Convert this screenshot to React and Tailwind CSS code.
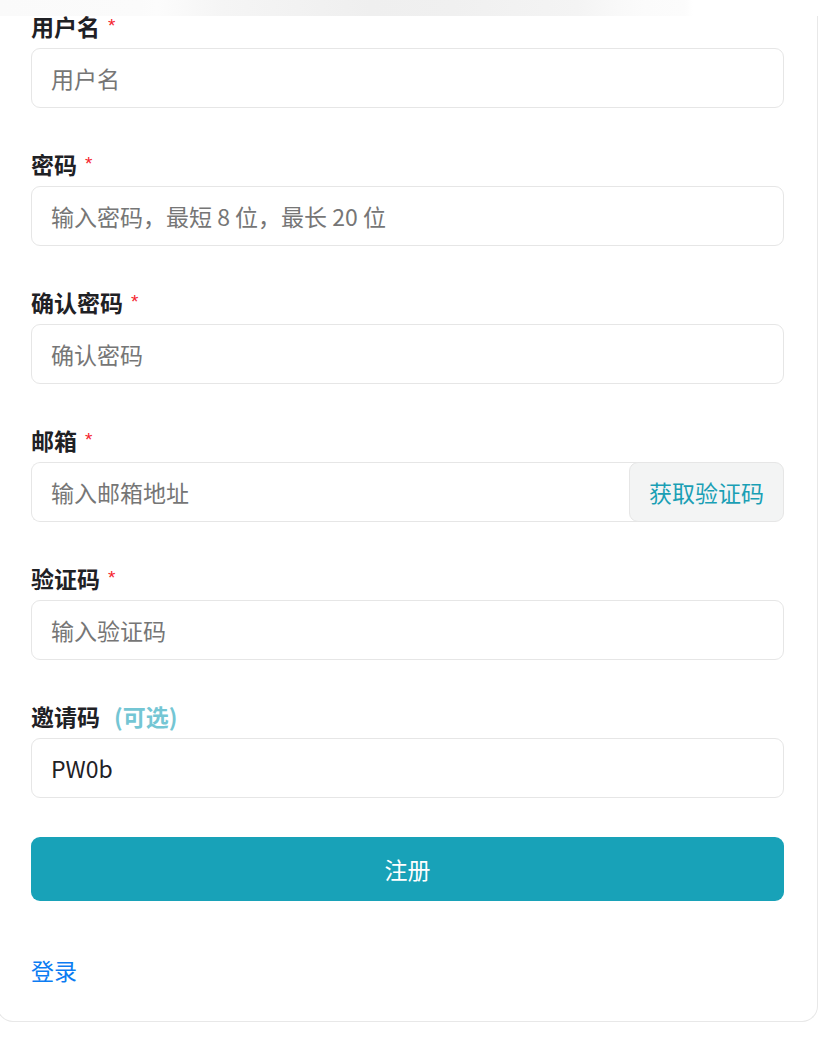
import React from "react";

function Field({ label, extra, children, required = true }) {
  return (
    <div className="flex flex-col">
      <div className="h-[30px] flex items-center text-[23px] leading-[30px] font-bold text-[#1f2125]">
        <span className="-mt-[3px]">{label}</span>
        {required && (
          <span className="self-start mt-[4px] ml-[8px] font-['Liberation_Sans',sans-serif] text-[19px] leading-[19px] font-normal text-[#f5222d]">
            *
          </span>
        )}
        {extra}
      </div>
      <div className="mt-[6px]">{children}</div>
    </div>
  );
}

const inputCls =
  "w-full h-[60px] rounded-[9px] border border-[#e6e6e6] bg-white px-[19px] text-[23px] text-[#1f2125] placeholder:text-[#767676] outline-none";

export default function App() {
  return (
    <div className="relative min-h-[1041px] bg-white font-['Noto_Sans_CJK_SC','Noto_Sans',sans-serif]">
      <div className="fixed top-0 left-0 right-0 z-20 h-[16px] bg-[linear-gradient(90deg,#fafafa_0%,#fbfbfb_17%,#fcfcfc_19%,#f5f5f5_27%,#efefef_45%,#f0f0f0_55%,#f4f4f4_70%,#f9f9f9_75%,#fbfbfb_78%,#fcfcfc_83%,#ffffff_84%,#ffffff_100%)]" />
      <div className="ml-[-3px] w-[821px] rounded-b-[16px] border border-t-0 border-[#e8e8e8] bg-white px-[33px] pt-[12px] pb-[34px]">
        <div className="flex flex-col gap-[42px]">
          <Field label="用户名">
            <input className={inputCls} placeholder="用户名" />
          </Field>
          <Field label="密码">
            <input className={inputCls} placeholder="输入密码，最短 8 位，最长 20 位" />
          </Field>
          <Field label="确认密码">
            <input className={inputCls} placeholder="确认密码" />
          </Field>
          <Field label="邮箱">
            <div className="flex h-[60px]">
              <input
                className="flex-1 h-[60px] rounded-l-[9px] border border-r-0 border-[#e6e6e6] bg-white pl-[19px] text-[23px] placeholder:text-[#767676] outline-none"
                placeholder="输入邮箱地址"
              />
              <button className="relative z-10 -ml-[8px] h-[60px] w-[155px] rounded-[9px] border border-[#e6e6e6] bg-[#f3f4f4] text-[23px] text-[#1a9fb5]">
                获取验证码
              </button>
            </div>
          </Field>
          <Field label="验证码">
            <input className={inputCls} placeholder="输入验证码" />
          </Field>
          <Field
            label="邀请码"
            required={false}
            extra={<span className="-mt-[3px] ml-[14px] text-[23px] font-bold text-[#74c6d4]">(可选)</span>}
          >
            <input className={inputCls} defaultValue="PW0b" />
          </Field>
        </div>
        <button className="mt-[39px] h-[64px] w-full rounded-[9px] bg-[#18a2b8] text-[23px] text-white">
          注册
        </button>
        <div className="mt-[54px] h-[32px] leading-[30px] text-[23px] text-[#0c7cf2]">
          <a href="#">登录</a>
        </div>
      </div>
    </div>
  );
}
